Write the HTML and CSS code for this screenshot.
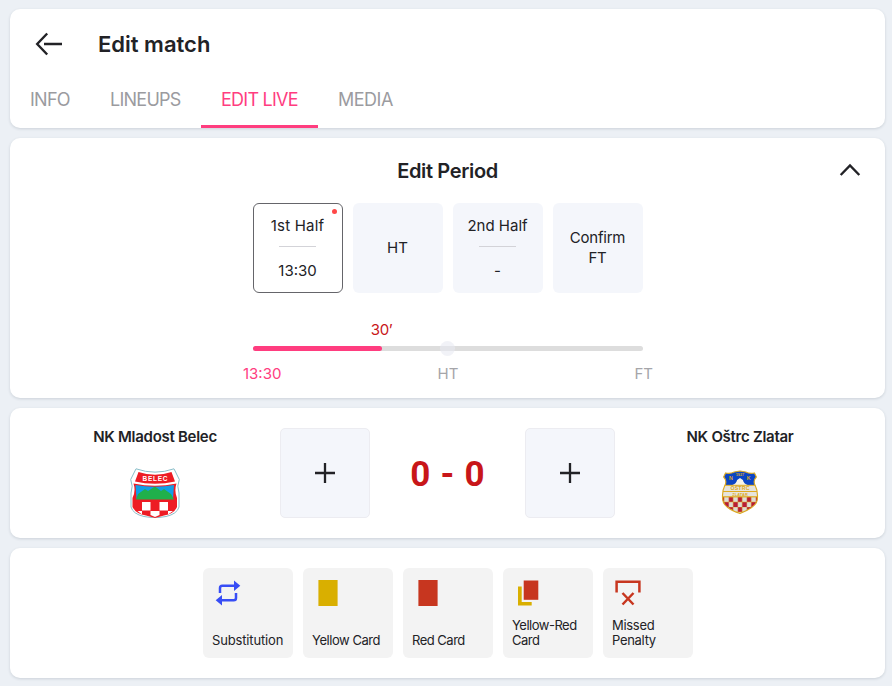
FILE: index.html
```html
<!DOCTYPE html>
<html lang="en">
<head>
<meta charset="utf-8">
<title>Edit match</title>
<link rel="stylesheet" href="styles.css">
</head>
<body>
<header class="panel header">
  <div class="title-row">
    <svg class="back" width="28" height="24" viewBox="0 0 28 24" fill="none" stroke="#222226" stroke-width="2.4"><path d="M12.200 1.500 2.200 12l10 10.500M9 12h18"/></svg>
    <h1 class="title">Edit match</h1>
  </div>
  <nav class="tabs">
    <a class="tab info">INFO</a>
    <a class="tab lineups">LINEUPS</a>
    <a class="tab live active">EDIT LIVE</a>
    <a class="tab media">MEDIA</a>
  </nav>
</header>

<section class="panel period">
  <div class="period-head">
    <h2 class="period-title">Edit Period</h2>
    <svg class="chevron" width="22" height="14" viewBox="0 0 22 14" fill="none" stroke="#222226" stroke-width="2.4"><path d="M1.700 12 11 2.500 20.300 12"/></svg>
  </div>
  <div class="tiles">
    <div class="tile current"><span class="half first">1st Half</span><i class="rule"></i><span class="time">13:30</span><i class="dot"></i></div>
    <div class="tile single"><span class="ht">HT</span></div>
    <div class="tile"><span class="half second">2nd Half</span><i class="rule"></i><span class="time">-</span></div>
    <div class="tile single"><span class="confirm">Confirm<br>FT</span></div>
  </div>
  <div class="timeline">
    <span class="minute">30’</span>
    <div class="track"><div class="fill"></div><i class="knob"></i></div>
    <div class="marks"><span class="mark start">13:30</span><span class="mark">HT</span><span class="mark end">FT</span></div>
  </div>
</section>

<section class="panel score">
  <div class="team">
    <span class="team-name home">NK Mladost Belec</span>
    <svg class="crest" width="50" height="50" viewBox="0 0 50 50">
      <path d="M6 .8Q25 7.500 44 .8L49.300 11.500Q46.500 18 49 25V39Q47 46 36 48.500L25 50 14 48.500Q3 46 1 39V25Q3.500 18 .7 11.500Z" fill="#fff" stroke="#8abec9" stroke-width="1"/>
      <path d="M8.500 4Q25 9.500 41.500 4L45 13.500Q25 18 5 13.500Z" fill="#ed1c24"/>
      <path d="M3.500 15.500Q25 20 46.500 15.500Q44 23 47 30V39Q44 46 34 47.500L25 50 16 47.500Q6 46 2.500 39V30Q6 23 3.500 15.500Z" fill="#ed1c24"/>
      <path d="M5.500 17Q25 20.500 44 17L43 31H6.500Z" fill="#119ee8"/>
      <path d="M6 31.500 8 26 15 21 18 23 25 18.500 31 23 34 21 41 26 44 31.500Z" fill="#20b04b"/>
      <path d="M12 34h8.500v8.500H12zM29.500 34H38v8.500h-8.500zM7.500 43H12v3.500zM20.500 43h9v4L25 49l-4.500-2zM38 43h5l-5 3.500z" fill="#fff"/>
      <text x="25" y="12.600" text-anchor="middle" textLength="25" class="belec">BELEC</text>
    </svg>
  </div>
  <button class="plus"><svg width="20" height="20" viewBox="0 0 20 20" stroke="#222226" stroke-width="2.300"><path d="M0 10h20M10 0v20"/></svg></button>
  <strong class="result">0 - 0</strong>
  <button class="plus"><svg width="20" height="20" viewBox="0 0 20 20" stroke="#222226" stroke-width="2.300"><path d="M0 10h20M10 0v20"/></svg></button>
  <div class="team">
    <span class="team-name away">NK Oštrc Zlatar</span>
    <svg class="crest" width="50" height="50" viewBox="0 0 50 50">
      <defs>
        <pattern id="checks" x="13.200" y="28" width="9.400" height="10" patternUnits="userSpaceOnUse"><path d="M0 0h9.400v10H0z" fill="#dddcd7"/><path d="M0 0h4.700v5H0zM4.700 5h4.700v5H4.700z" fill="#b81c36"/><path d="M0 0h9.400M0 5h9.400M0 0v10M4.700 0v10" stroke="#dfa91b" stroke-width=".5"/></pattern>
        <clipPath id="shield"><path d="M10 4Q15 5 19 3L25 2l6 1q4 2 9 1l2 4q-4 4-1 9 3 5 2 14-1 7-18 13.500Q8 39 7 31q-1-9 2-14 3-5-1-9Z"/></clipPath>
      </defs>
      <g transform="translate(1 1) scale(.96 1)">
      <g clip-path="url(#shield)">
        <path d="M5 1h40v16H5z" fill="#0b45c4"/>
        <path d="M5 16h40v12H5z" fill="#e6e4dc"/>
        <path d="M5 28h40v20H5z" fill="url(#checks)"/>
        <path d="M17 16q4-1 5-5l3-2 3 2q1 4 5 5z" fill="#f6f4e9"/>
        <path d="M5 16.300h40M5 22.500h40M5 27.700h40" stroke="#dfa91b" stroke-width="1"/>
      </g>
      <path d="M10 4Q15 5 19 3L25 2l6 1q4 2 9 1l2 4q-4 4-1 9 3 5 2 14-1 7-18 13.500Q8 39 7 31q-1-9 2-14 3-5-1-9Z" fill="none" stroke="#dba923" stroke-width="1.200"/>
      <g class="ostrc" text-anchor="middle"><text x="15.500" y="11.500">N</text><text x="34" y="11.500">K</text><text x="25" y="7" class="tiny">1927</text><text x="25" y="21.500" textLength="20">OŠTRC</text><text x="25" y="26.600" class="tiny" textLength="16">ZLATAR</text></g>
      </g>
    </svg>
  </div>
</section>

<section class="panel actions">
  <div class="action">
    <svg width="26" height="26" viewBox="0 0 26 26" fill="none"><path d="M5 13V8q0-2.300 2.300-2.300H20M21 13v5q0 2.300-2.300 2.300H6" stroke="#374df5" stroke-width="2.500"/><path d="m19 .5 6.300 5.200L19 11zM7 15 .7 20.300 7 25.500z" fill="#374df5"/></svg>
    <span class="label substitution">Substitution</span>
  </div>
  <div class="action">
    <svg width="26" height="26" viewBox="0 0 26 26"><path d="M3.400 0h19.200v26H3.400z" fill="#d9af00"/></svg>
    <span class="label yellow">Yellow Card</span>
  </div>
  <div class="action">
    <svg width="26" height="26" viewBox="0 0 26 26"><path d="M3.400 0h19.200v26H3.400z" fill="#c7361f"/></svg>
    <span class="label red">Red Card</span>
  </div>
  <div class="action">
    <svg width="26" height="26" viewBox="0 0 26 26"><path d="M3 6.500h3.700V22h10v3.600H3z" fill="#d9af00"/><path d="M8.700.5h14.600v19.300H8.700z" fill="#c7361f"/></svg>
    <span class="label second-yellow">Yellow-Red<br>Card</span>
  </div>
  <div class="action">
    <svg width="26" height="26" viewBox="0 0 26 26" fill="none" stroke="#c7361f" stroke-width="2.500"><path d="M1.600 12.500V1.800h22.800v10.700M7.500 13l11 11.500M18.500 13l-11 11.500"/></svg>
    <span class="label missed">Missed<br>Penalty</span>
  </div>
</section>
</body>
</html>
```
FILE: styles.css
```css
* { box-sizing: border-box; }
body {
  margin: 0;
  padding: 9px 7px 8px 10px;
  height: 686px;
  overflow: hidden;
  display: flex;
  flex-direction: column;
  gap: 10px;
  background: #ecf0f5;
  color: #222226;
  font-family: Inter, "Liberation Sans", sans-serif;
  font-size: 15px;
  white-space: nowrap;
}
h1, h2 { margin: 0; font-weight: 600; }
svg { display: block; flex: none; }
.panel {
  background: #fff;
  border-radius: 10px;
  box-shadow: 0 1px 3px rgba(34, 50, 70, .16);
  flex: none;
}

.header { height: 119px; display: flex; flex-direction: column; justify-content: space-between; }
.title-row { display: flex; align-items: center; gap: 35px; height: 70px; padding-left: 25px; }
.title { font-size: 22px; line-height: 28px; }
.tabs { display: flex; height: 49px; }
.tab {
  padding: 9px 0 0 20px;
  font-size: 18px;
  line-height: 24px;
  color: #9b9b9f;
  border-bottom: 3px solid transparent;
}
.info { width: 80px; letter-spacing: -.75px; }
.lineups { width: 111px; letter-spacing: -.75px; }
.live { width: 117px; letter-spacing: -.75px; }
.media { width: 95px; letter-spacing: -.5px; }
.active { color: #ff3d7f; border-color: #ff3d7f; }

.period { height: 260px; }
.period-head {
  display: grid;
  grid-template-columns: 1fr auto 1fr;
  align-items: center;
  height: 65px;
  padding: 0 24px;
}
.period-title { grid-column: 2; font-size: 20px; line-height: 26px; letter-spacing: -.35px; }
.chevron { justify-self: end; margin-bottom: 2px; }
.tiles { display: flex; gap: 10px; padding-left: 243px; }
.tile {
  width: 90px;
  height: 90px;
  border-radius: 6px;
  background: #f4f6fb;
  display: flex;
  flex-direction: column;
  align-items: center;
  padding: 13px 1px 0 0;
  position: relative;
  line-height: 20px;
  text-align: center;
}
.current { background: #fff; border: 1px solid #65656a; padding: 12px 1px 0 0; }
.single { justify-content: center; padding: 0 1px 0 0; }
.first { letter-spacing: .2px; }
.rule { flex: none; width: 37px; height: 1px; margin: 10px 0 14px; background: #d3d3d8; }
.confirm { letter-spacing: -.2px; }
.dot { position: absolute; top: 5px; right: 5px; width: 5px; height: 5px; border-radius: 50%; background: #ff4747; }
.timeline { width: 390px; margin: 27px 0 0 243px; }
.minute { display: block; width: 257px; line-height: 20px; text-align: center; letter-spacing: -.4px; color: #c81619; }
.track { height: 5px; margin-top: 6px; border-radius: 3px; background: #ddd; position: relative; }
.fill { width: 33%; height: 5px; border-radius: 3px; background: #ff3d7f; }
.knob { position: absolute; left: 187px; top: -5px; width: 15px; height: 15px; border-radius: 50%; background: rgba(232, 233, 242, .6); }
.marks { display: grid; grid-template-columns: 1fr auto 1fr; margin: 13px -10px 0; line-height: 20px; color: #a5a5a9; }
.end { text-align: right; }
.start { color: #ff3d7f; }

.score { height: 130px; display: flex; padding: 20px 0 0 20px; }
.team { width: 250px; display: flex; flex-direction: column; align-items: center; gap: 22px; }
.team-name { font-size: 15px; line-height: 18px; font-weight: 600; letter-spacing: -.28px; }
.plus {
  width: 90px;
  height: 90px;
  border: 1px solid #ececf1;
  border-radius: 5px;
  background: #f4f6fb;
  display: grid;
  place-items: center;
  padding: 0;
}
.result { width: 155px; line-height: 94px; font-family: Roboto, sans-serif; font-size: 35px; font-weight: 700; word-spacing: 1.5px; color: #c81619; text-align: center; }
.belec { font: 700 6.5px "Liberation Sans", sans-serif; fill: #fff; }
.ostrc { font: 700 5.5px "Liberation Sans", sans-serif; fill: #dba923; }
.ostrc .tiny { font-size: 4px; }

.actions { height: 130px; display: flex; gap: 10px; padding: 20px 0 0 193px; }
.action {
  width: 90px;
  height: 90px;
  padding: 12px 0 10px 9px;
  background: #f3f3f3;
  border-radius: 6px;
  display: flex;
  flex-direction: column;
  justify-content: space-between;
}
.action svg { margin-left: 3px; }
.label { font-size: 13px; line-height: 15px; }
.substitution { letter-spacing: -.15px; }
.yellow { letter-spacing: -.45px; }
.red { letter-spacing: -.5px; }
.second-yellow { letter-spacing: -.5px; }
.missed { letter-spacing: -.3px; }
```
